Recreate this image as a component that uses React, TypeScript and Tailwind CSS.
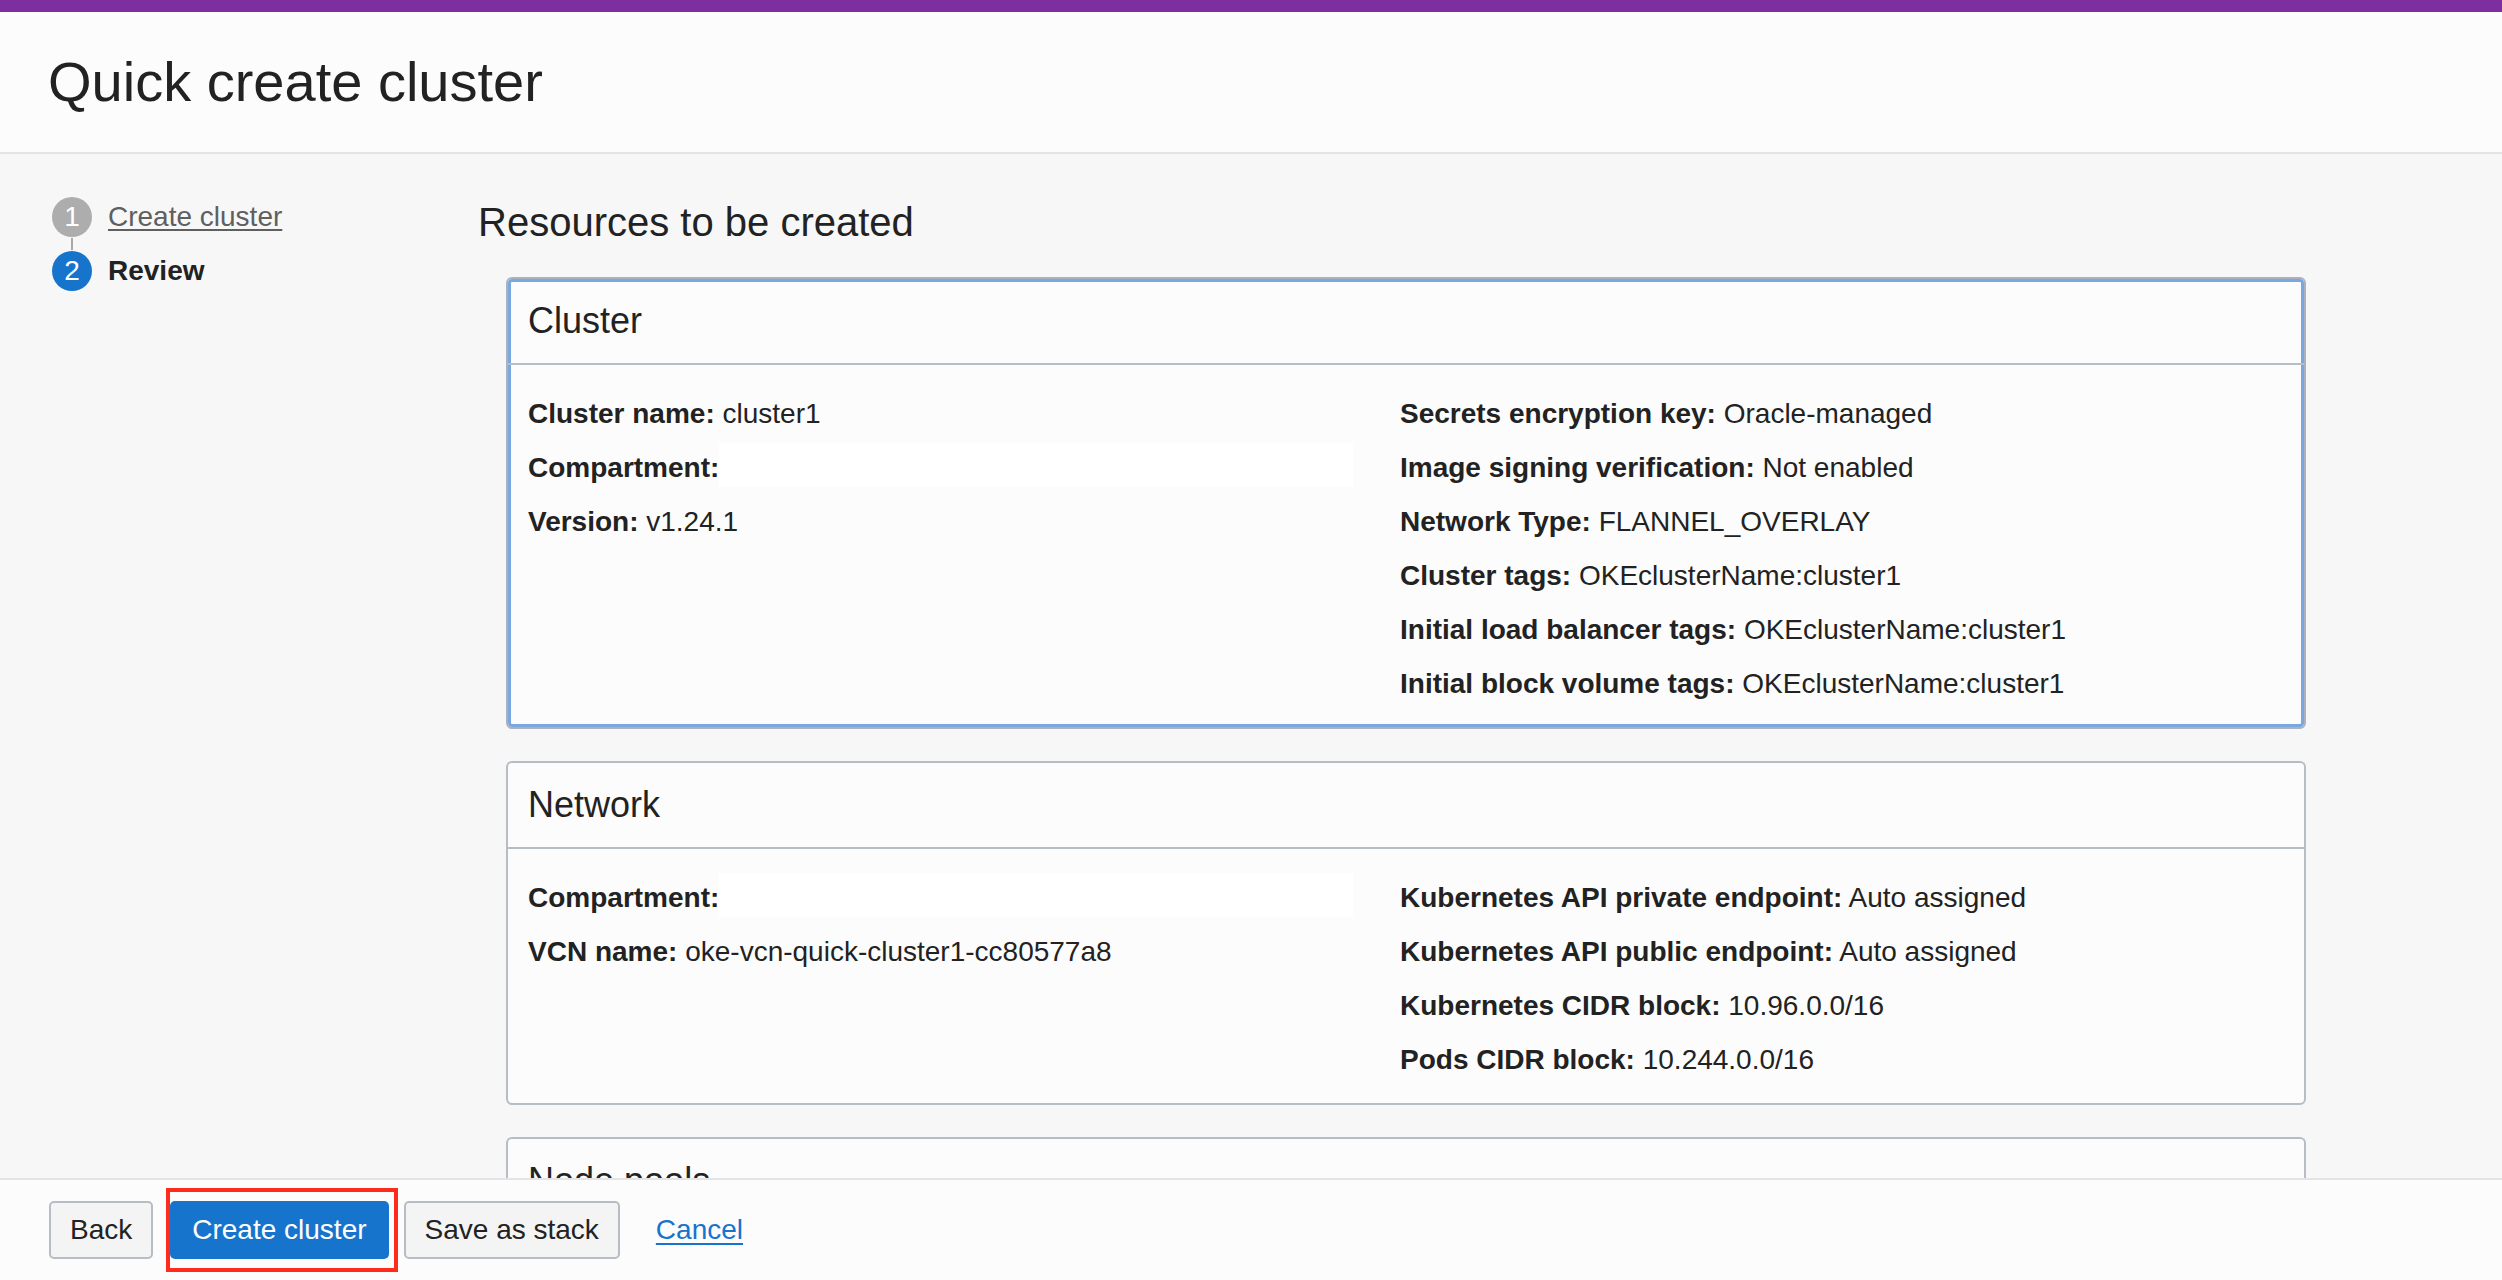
import React from 'react';

type Row = [string, string | null];

const clusterLeft: Row[] = [
  ['Cluster name:', 'cluster1'],
  ['Compartment:', null],
  ['Version:', 'v1.24.1'],
];

const clusterRight: Row[] = [
  ['Secrets encryption key:', 'Oracle-managed'],
  ['Image signing verification:', 'Not enabled'],
  ['Network Type:', 'FLANNEL_OVERLAY'],
  ['Cluster tags:', 'OKEclusterName:cluster1'],
  ['Initial load balancer tags:', 'OKEclusterName:cluster1'],
  ['Initial block volume tags:', 'OKEclusterName:cluster1'],
];

const networkLeft: Row[] = [
  ['Compartment:', null],
  ['VCN name:', 'oke-vcn-quick-cluster1-cc80577a8'],
];

const networkRight: Row[] = [
  ['Kubernetes API private endpoint:', 'Auto assigned'],
  ['Kubernetes API public endpoint:', 'Auto assigned'],
  ['Kubernetes CIDR block:', '10.96.0.0/16'],
  ['Pods CIDR block:', '10.244.0.0/16'],
];

function Field({ row }: { row: Row }) {
  const [label, value] = row;
  return (
    <div className="leading-[54px] whitespace-nowrap">
      <span className="font-bold">{label}</span>
      {value === null ? (
        // compartment name is blanked out in the screenshot
        <span className="inline-block w-[634px] h-[44px] bg-white align-[-10px]" />
      ) : (
        <> {value}</>
      )}
    </div>
  );
}

function Card({ title, left, right, focused }: { title: string; left: Row[]; right: Row[]; focused?: boolean }) {
  return (
    <section
      className={
        'bg-[#fcfcfc] border-2 rounded-[6px] ' +
        (focused ? 'border-[#a9b3bf] shadow-[inset_0_0_0_3px_#79a7de]' : 'border-[#b6bdc6]')
      }
    >
      <div className="h-[86px] flex items-center px-5 border-b-2 border-[#b6bdc6] text-[36px]">{title}</div>
      <div className="grid grid-cols-[872px_1fr] px-5 pt-[22px] pb-4 text-[28px]">
        <div>
          {left.map((r) => (
            <Field key={r[0]} row={r} />
          ))}
        </div>
        <div>
          {right.map((r) => (
            <Field key={r[0]} row={r} />
          ))}
        </div>
      </div>
    </section>
  );
}

export default function App() {
  return (
    <div className="h-screen flex flex-col bg-[#f7f7f7] text-[#222] font-['Liberation_Sans',Arial,sans-serif] overflow-hidden">
      <div className="h-[12px] bg-[#7d2f9f] shrink-0" />
      <header className="h-[142px] shrink-0 bg-[#fcfcfc] border-b-2 border-[#e4e4e4] flex items-center px-[48px]">
        <h1 className="text-[56px] leading-none">Quick create cluster</h1>
      </header>

      <div className="flex-1 min-h-0 flex overflow-hidden">
        <nav className="w-[478px] shrink-0 pl-[52px] pt-[42px]">
          <div className="flex items-center gap-4">
            <span className="w-10 h-10 rounded-full bg-[#adadad] text-white text-[28px] flex items-center justify-center">1</span>
            <a href="#" className="text-[28px] text-[#5f5f5f] underline underline-offset-[3px]">
              Create cluster
            </a>
          </div>
          <div className="w-[2px] h-[12px] bg-[#a8a8a8] ml-[19px]" />
          <div className="flex items-center gap-4">
            <span className="w-10 h-10 rounded-full bg-[#1774cc] text-white text-[28px] flex items-center justify-center">2</span>
            <span className="text-[28px] font-bold">Review</span>
          </div>
        </nav>

        <main className="flex-1 pr-[196px] pt-[46px]">
          <h2 className="text-[40px] leading-[44px]">Resources to be created</h2>
          <div className="ml-[28px] mt-[33px] flex flex-col gap-8">
            <Card title="Cluster" left={clusterLeft} right={clusterRight} focused />
            <Card title="Network" left={networkLeft} right={networkRight} />
            <Card title="Node pools" left={[]} right={[]} />
          </div>
        </main>
      </div>

      <footer className="h-[102px] shrink-0 bg-[#fcfcfc] border-t-2 border-[#e4e4e4] flex items-center px-[49px] text-[28px]">
        <button className="h-[58px] px-[19px] bg-[#f4f4f4] border-2 border-[#b6bdc6] rounded-[5px]">Back</button>
        <div className="relative ml-[17px]">
          <button className="h-[58px] px-[22px] bg-[#1774cc] text-white rounded-[5px]">Create cluster</button>
          <span className="absolute -left-[4px] -right-[9px] -top-[13px] -bottom-[13px] border-4 border-[#ff2b1c] pointer-events-none" />
        </div>
        <button className="ml-[15px] h-[58px] px-[19px] bg-[#f4f4f4] border-2 border-[#b6bdc6] rounded-[5px]">Save as stack</button>
        <a href="#" className="ml-[36px] text-[#1774cc] underline underline-offset-[4px]">
          Cancel
        </a>
      </footer>
    </div>
  );
}
